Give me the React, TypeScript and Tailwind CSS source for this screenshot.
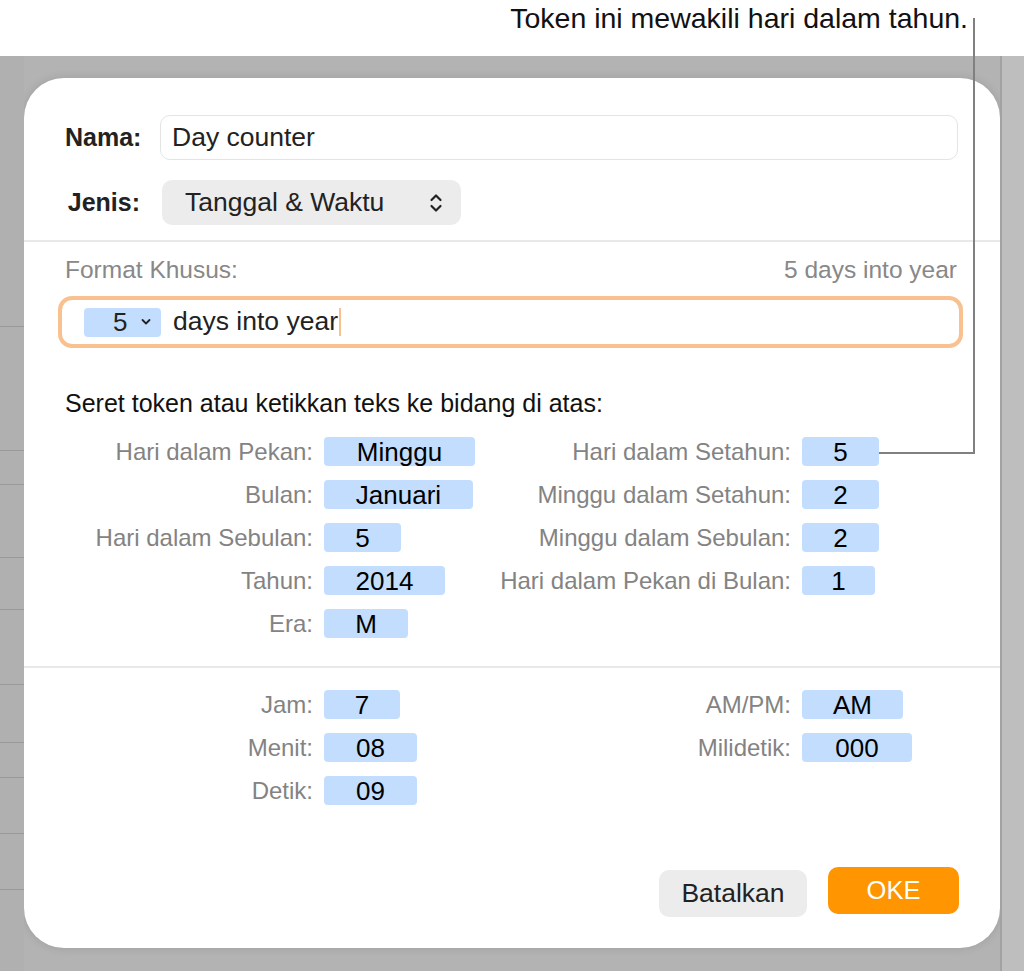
type Tok = { label: string; value: string; w: string }

const leftTokens: Tok[] = [
  { label: 'Hari dalam Pekan:', value: 'Minggu', w: 'w-[151px]' },
  { label: 'Bulan:', value: 'Januari', w: 'w-[149px]' },
  { label: 'Hari dalam Sebulan:', value: '5', w: 'w-[77px]' },
  { label: 'Tahun:', value: '2014', w: 'w-[121px]' },
  { label: 'Era:', value: 'M', w: 'w-[84px]' },
]

const rightTokens: Tok[] = [
  { label: 'Hari dalam Setahun:', value: '5', w: 'w-[77px]' },
  { label: 'Minggu dalam Setahun:', value: '2', w: 'w-[77px]' },
  { label: 'Minggu dalam Sebulan:', value: '2', w: 'w-[77px]' },
  { label: 'Hari dalam Pekan di Bulan:', value: '1', w: 'w-[73px]' },
]

const timeLeft: Tok[] = [
  { label: 'Jam:', value: '7', w: 'w-[76px]' },
  { label: 'Menit:', value: '08', w: 'w-[93px]' },
  { label: 'Detik:', value: '09', w: 'w-[93px]' },
]

const timeRight: Tok[] = [
  { label: 'AM/PM:', value: 'AM', w: 'w-[101px]' },
  { label: 'Milidetik:', value: '000', w: 'w-[110px]' },
]

function Token({ t }: { t: Tok }) {
  return (
    <div
      className={`${t.w} h-[29px] flex items-center justify-center rounded-[4px] bg-[#c2ddfd] text-[26px] leading-none text-black`}
    >
      {t.value}
    </div>
  )
}

function TokenGrid({ left, right }: { left: Tok[]; right: Tok[] }) {
  const rows = Math.max(left.length, right.length)
  return (
    <div className="grid grid-cols-[248px_160px_296px_auto] gap-x-[11px] gap-y-[14px]">
      {Array.from({ length: rows }).map((_, i) => (
        <div key={i} className="contents">
          <div className="h-[29px] flex items-center justify-end whitespace-nowrap text-[24px] text-[#838383]">
            {left[i]?.label}
          </div>
          <div className="h-[29px] flex items-center">{left[i] && <Token t={left[i]} />}</div>
          <div className="h-[29px] flex items-center justify-end whitespace-nowrap text-[24px] text-[#838383]">
            {right[i]?.label}
          </div>
          <div className="h-[29px] flex items-center">{right[i] && <Token t={right[i]} />}</div>
        </div>
      ))}
    </div>
  )
}

// left edge of the window behind the sheet
const stripLines = [326, 450, 484, 557, 609, 684, 742, 777, 833, 889]

export default function App() {
  return (
    <div className="relative w-[1024px] h-[971px] overflow-hidden bg-white font-['Liberation_Sans',Arial,sans-serif]">
      {/* callout */}
      <div className="h-[56px] flex justify-end pr-[56px] pt-[1px] text-[28.5px] leading-[34px] text-[#111]">
        Token ini mewakili hari dalam tahun.
      </div>

      <div className="flex h-[915px] bg-[#b3b3b3]">
        <div className="relative w-[24px] bg-[#b0b0b0]">
          {stripLines.map(y => (
            <div key={y} className="absolute left-0 w-[24px] h-px bg-[#9a9a9a]" style={{ top: y - 56 }} />
          ))}
        </div>

        <div className="pt-[22px]">
          {/* sheet */}
          <div className="w-[976px] rounded-[40px] bg-white shadow-[0_0_10px_rgba(0,0,0,0.12)] pt-[37px] pb-[31px]">
            <div className="px-[41px]">
              <div className="flex items-center gap-[20px]">
                <div className="w-[75px] text-right text-[25px] font-bold text-[#222]">Nama:</div>
                <div className="h-[45px] flex-1 mr-[1px] flex items-center rounded-[10px] border border-[#e4e4e4] px-[11px] text-[26.5px] text-[#222]">
                  Day counter
                </div>
              </div>
              <div className="mt-[20px] flex items-center gap-[20px]">
                <div className="w-[75px] text-right text-[25px] font-bold text-[#222]">Jenis:</div>
                <div className="ml-[2px] h-[45px] w-[299px] flex items-center justify-between rounded-[10px] bg-[#ececec] pl-[23px] pr-[18px] text-[26.5px] text-[#222]">
                  <span>Tanggal &amp; Waktu</span>
                  <svg width="14" height="22" viewBox="0 0 14 22" fill="none" stroke="#222" strokeWidth="2.2" strokeLinecap="round" strokeLinejoin="round">
                    <path d="M2.5 8 L7 3.5 L11.5 8" />
                    <path d="M2.5 14 L7 18.5 L11.5 14" />
                  </svg>
                </div>
              </div>
            </div>

            <div className="mt-[15px] h-[2px] bg-[#e9e9e9]" />

            <div className="px-[41px]">
              <div className="mt-[14px] flex justify-between pr-[2px] text-[24.5px] leading-[28px] text-[#888]">
                <span>Format Khusus:</span>
                <span>5 days into year</span>
              </div>

              <div className="mt-[12px] -ml-[7px] -mr-[4px] h-[52px] flex items-center rounded-[14px] border-[4px] border-[#f9c18f] pl-[22px]">
                <div className="w-[77px] h-[29px] flex items-center rounded-[4px] bg-[#c2ddfd] pl-[29px] text-[26px] text-[#222]">
                  <span>5</span>
                  <svg className="ml-[14px]" width="10" height="8" viewBox="0 0 10 8" fill="none" stroke="#222" strokeWidth="1.8" strokeLinecap="round" strokeLinejoin="round">
                    <path d="M1.5 2 L5 5.5 L8.5 2" />
                  </svg>
                </div>
                <span className="ml-[12px] text-[26.5px] text-[#222]">days into year</span>
                <div className="ml-[1px] w-[2px] h-[28px] bg-[#f9c18f]" />
              </div>

              <div className="mt-[41px] text-[25px] leading-[28px] text-[#111]">
                Seret token atau ketikkan teks ke bidang di atas:
              </div>

              <div className="mt-[20px]">
                <TokenGrid left={leftTokens} right={rightTokens} />
              </div>
            </div>

            <div className="mt-[28px] h-[2px] bg-[#e9e9e9]" />

            <div className="px-[41px]">
              <div className="mt-[22px]">
                <TokenGrid left={timeLeft} right={timeRight} />
              </div>

              <div className="mt-[62px] flex items-start justify-end gap-[21px]">
                <button className="mt-[3px] h-[47px] w-[148px] rounded-[10px] bg-[#ececec] text-[26.5px] text-[#222]">
                  Batalkan
                </button>
                <button className="h-[47px] w-[131px] rounded-[10px] bg-[#ff9500] text-[25.5px] text-white">
                  OKE
                </button>
              </div>
            </div>
          </div>
        </div>

        <div className="w-[24px] border-l-2 border-[#a2a2a2] bg-[#bebebe]" />
      </div>

      {/* pointer line from callout to token */}
      <div className="absolute left-[973px] top-[18px] w-[2px] h-[436px] bg-[#808080]" />
      <div className="absolute left-[879px] top-[452px] w-[96px] h-[2px] bg-[#808080]" />
    </div>
  )
}
